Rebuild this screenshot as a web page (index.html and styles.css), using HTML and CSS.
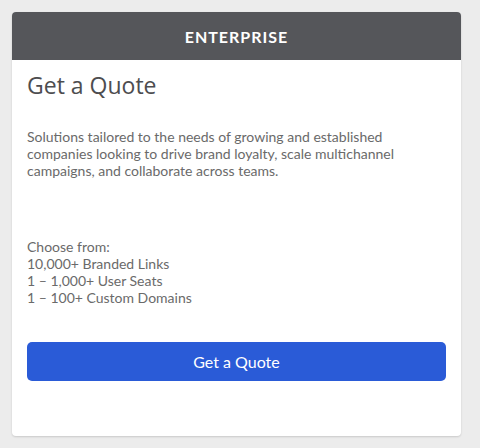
FILE: index.html
```html
<!DOCTYPE html>
<html>
<head>
<meta charset="utf-8">
<link rel="stylesheet" href="styles.css">
</head>
<body>
<div class="card">
  <div class="card-header">ENTERPRISE</div>
  <div class="card-body">
    <h2 class="title">Get a Quote</h2>
    <p class="desc">Solutions tailored to the needs of growing and established companies looking to drive brand loyalty, scale multichannel campaigns, and collaborate across teams.</p>
    <p class="list">Choose from:<br>10,000+ Branded Links<br>1 – 1,000+ User Seats<br>1 – 100+ Custom Domains</p>
    <a class="btn">Get a Quote</a>
  </div>
</div>
</body>
</html>
```
FILE: styles.css
```css
html, body {
  margin: 0;
  padding: 0;
  background: #ececec;
}
body {
  padding: 12px 19px 12px 12px;
  font-family: "Lato", "Liberation Sans", sans-serif;
}
.card {
  width: 449px;
  height: 424px;
  background: #fff;
  border-radius: 4px;
  box-shadow: 0 1px 2px rgba(0,0,0,0.15);
  display: flex;
  flex-direction: column;
  overflow: hidden;
}
.card-header {
  height: 48px;
  background: #55565a;
  color: #fff;
  font-weight: 700;
  font-size: 16px;
  letter-spacing: 1px;
  display: flex;
  align-items: center;
  justify-content: center;
}
.card-body {
  padding: 11px 15px 0 15px;
  display: flex;
  flex-direction: column;
}
.title {
  margin: 0;
  font-family: "Open Sans", "Lato", sans-serif;
  font-size: 23px;
  font-weight: 500;
  color: #4d4d4f;
  line-height: 28px;
}
.desc {
  margin: 29px 0 0 0;
  font-size: 14px;
  line-height: 17px;
  color: #6a6a6a;
}
.list {
  margin: 59px 0 0 0;
  font-size: 14px;
  line-height: 17px;
  color: #6a6a6a;
}
.btn {
  margin-top: 36px;
  height: 39px;
  background: #2a5bd7;
  border-radius: 5px;
  color: #fff;
  font-size: 16px;
  display: flex;
  align-items: center;
  justify-content: center;
}
```
